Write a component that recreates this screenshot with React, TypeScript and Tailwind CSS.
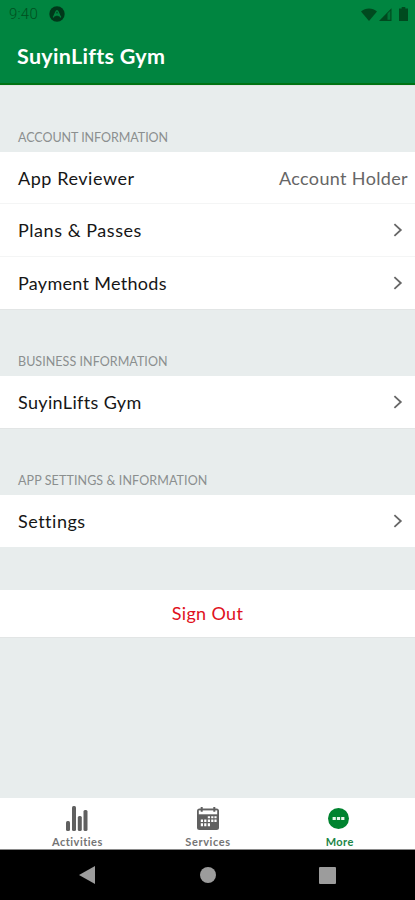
import React from 'react';

const ChevronIcon = () => (
    <svg width="10" height="16" viewBox="0 0 10 16" fill="none" className="mr-[12px]">
        <path d="M1.4 2.2 7.8 8l-6.4 5.8" stroke="#666" strokeWidth="1.8" />
    </svg>
);

const StatusBar = () => (
    <div className="flex h-[28px] items-center pl-[9px] pr-[7px] text-[#00501f]">
        <span className="font-['Roboto',sans-serif] text-[15px] font-light leading-none tracking-[0.2px]">9:40</span>
        <svg width="16" height="16" viewBox="0 0 16 16" className="ml-[11px]">
            <circle cx="8" cy="8" r="7.7" fill="#00381a" />
            <path d="M4.2 11.4C6 9.3 6.6 4.8 8 4.8s2 4.5 3.8 6.6M6.4 10 8 7.8 9.6 10" fill="none" stroke="#008540" strokeWidth="1.4" />
        </svg>
        <div className="ml-auto flex items-center text-[#004a1f]">
            <svg width="16" height="13" viewBox="0 0 16 13">
                <path d="M0 3.4C4.4-.5 11.6-.5 16 3.4L8 13Z" fill="currentColor" />
            </svg>
            <svg width="13" height="13" viewBox="0 0 13 13" className="ml-[2px]">
                <path d="M0 13 12.5.3V13Z" fill="currentColor" />
                <path d="M8.5 5.5 11.3 2.8v9H8.5Z" fill="#008540" opacity=".75" />
            </svg>
            <svg width="9" height="14" viewBox="0 0 9 14" className="ml-[7px]">
                <path d="M2.7 0h3.6v1.5H9V14H0V1.5h2.7Z" fill="currentColor" />
            </svg>
        </div>
    </div>
);

interface SectionTitleProps {
    className: string;
    children: React.ReactNode;
}

const SectionTitle: React.FC<SectionTitleProps> = ({ className, children }) => (
    <h2 className={`flex h-[67px] items-end border-t border-[#e2e5e5] pb-[6px] pl-[18px] text-[12.5px] leading-[16px] text-[#8b8f8f] ${className}`}>
        {children}
    </h2>
);

interface RowProps {
    label: string;
    value?: string;
    className: string;
}

const Row: React.FC<RowProps> = ({ label, value, className }) => (
    <button className={`flex w-full items-center justify-between bg-white pl-[18px] text-left text-[18px] leading-[24px] text-[#161616] ${className}`}>
        <span>{label}</span>
        {value ? <span className="pr-[7px] tracking-[0.35px] text-[#666]">{value}</span> : <ChevronIcon />}
    </button>
);

const ActivitiesIcon = () => (
    <svg width="22" height="25" viewBox="0 0 22 25" fill="#606060">
        <rect x="0" y="15" width="4" height="10" rx="1.5" />
        <rect x="6" y="0" width="4" height="25" rx="1.5" />
        <rect x="11.8" y="10" width="4" height="15" rx="1.5" />
        <rect x="17.5" y="4" width="4" height="21" rx="1.5" />
    </svg>
);

const ServicesIcon = () => (
    <svg width="22" height="23" viewBox="0 0 22 23">
        <rect x="0" y="1.5" width="22" height="21.5" rx="2.5" fill="#606060" />
        <path d="M1.8 3.4h18.4v3.9H1.8Z" fill="#fff" />
        <path d="M4.7 0v4.8M17.3 0v4.8" stroke="#606060" strokeWidth="2" />
        <path
            d="M10.8 9.3h2.2v2h-2.2ZM14.2 9.3h2.2v2h-2.2ZM17.4 9.3h2.2v2h-2.2ZM3.8 12.6h2.2v2.4h-2.2ZM7.2 12.6h2.2v2.4h-2.2ZM10.8 12.6h2.2v2.4h-2.2ZM14.2 12.6h2.2v2.4h-2.2ZM17.4 12.6h2.2v2.4h-2.2ZM3.8 16.2h2.2v3h-2.2ZM7.2 16.2h2.2v3h-2.2ZM10.8 16.2h2.2v3h-2.2Z"
            fill="#fff"
        />
    </svg>
);

const MoreIcon = () => (
    <svg width="21" height="21" viewBox="0 0 21 21">
        <circle cx="10.5" cy="10.5" r="10.5" fill="#00832f" />
        <path d="M4.6 9h3.2v3H4.6ZM8.9 9h3.2v3H8.9ZM13.2 9h3.2v3h-3.2Z" fill="#e9f6ec" />
    </svg>
);

const App: React.FC = () => {
    return (
        <div className="flex h-[900px] w-[415px] flex-col overflow-hidden bg-[#e8eded] font-['Lato','Noto_Sans',sans-serif]">
            <header className="h-[85px] border-b-2 border-[#007314] bg-[#008540]">
                <StatusBar />
                <h1 className="pl-[17px] pt-[14px] text-[21.5px] font-bold leading-[28px] tracking-[0.3px] text-white">SuyinLifts Gym</h1>
            </header>

            <main className="flex-1">
                <SectionTitle className="tracking-[-0.05px]">ACCOUNT INFORMATION</SectionTitle>
                <div className="divide-y divide-[#f4f5f5]">
                    <Row label="App Reviewer" value="Account Holder" className="h-[52px] tracking-[0.55px]" />
                    <Row label="Plans & Passes" className="h-[53px] tracking-[0.55px]" />
                    <Row label="Payment Methods" className="h-[52px] tracking-[0.3px]" />
                </div>

                <SectionTitle className="tracking-[0.05px]">BUSINESS INFORMATION</SectionTitle>
                <Row label="SuyinLifts Gym" className="h-[52px] tracking-[0.35px]" />

                <SectionTitle className="tracking-[0.1px]">APP SETTINGS &amp; INFORMATION</SectionTitle>
                <Row label="Settings" className="h-[52px] tracking-[0.5px]" />

                <div className="mt-[43px] border-b border-[#e2e5e5]">
                    <button className="h-[47px] w-full bg-white text-[18px] tracking-[0.35px] text-[#e01020]">Sign Out</button>
                </div>
            </main>

            <nav className="flex h-[52px] border-b border-[#8a8a8a] bg-white pl-[12px] pr-[11px] text-[11px] font-bold leading-[14px] text-[#747474]">
                <div className="flex flex-1 flex-col items-center">
                    <div className="flex h-[37px] items-end pb-[4px]"><ActivitiesIcon /></div>
                    <span className="tracking-[0.5px]">Activities</span>
                </div>
                <div className="flex flex-1 flex-col items-center">
                    <div className="flex h-[37px] items-end pb-[5px]"><ServicesIcon /></div>
                    <span className="tracking-[0.6px]">Services</span>
                </div>
                <div className="flex flex-1 flex-col items-center text-[#1c8546]">
                    <div className="flex h-[37px] items-end pb-[6px]"><MoreIcon /></div>
                    <span className="pl-[2px] tracking-[0.4px]">More</span>
                </div>
            </nav>

            <div className="flex h-[50px] items-center justify-between bg-black pl-[79px] pr-[79px]">
                <svg width="17" height="18" viewBox="0 0 17 18">
                    <path d="M16 0v18L0 9Z" fill="#9c9c9c" />
                </svg>
                <div className="h-4 w-4 rounded-full bg-[#9c9c9c]" />
                <div className="h-[17px] w-[17px] rounded-[1px] bg-[#9c9c9c]" />
            </div>
        </div>
    );
};

export default App;
